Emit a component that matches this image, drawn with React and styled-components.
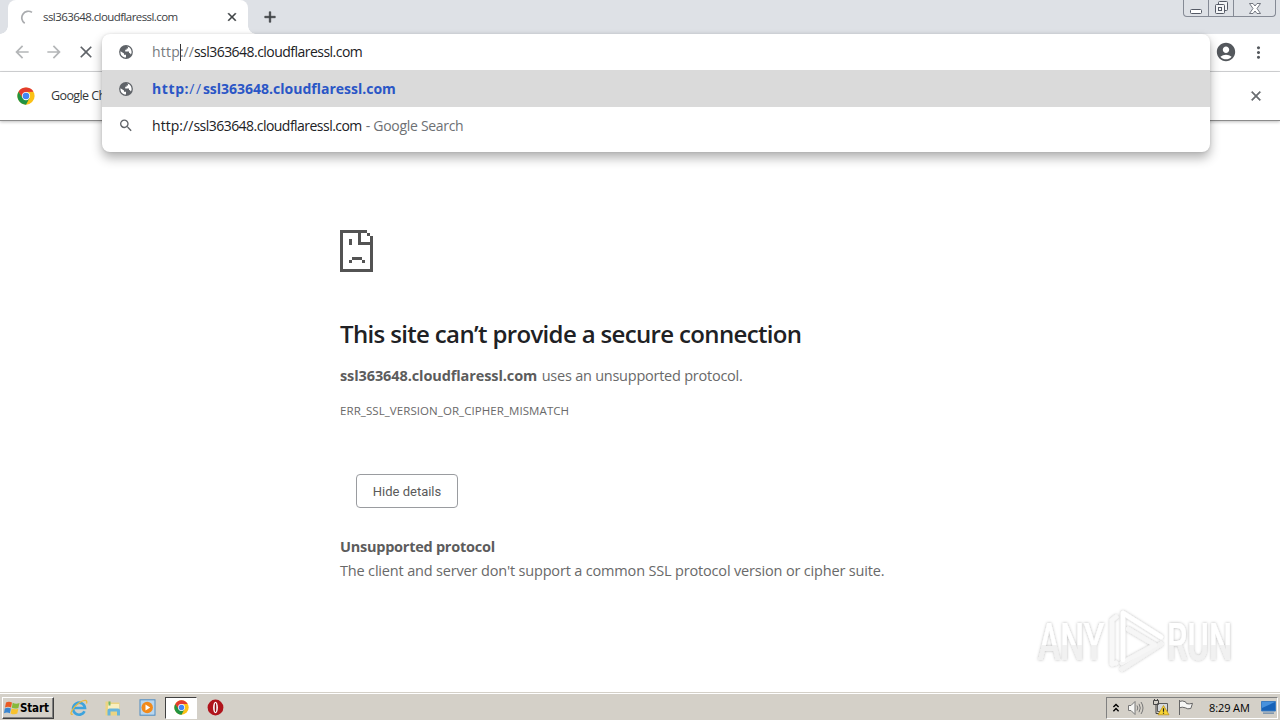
import React from 'react';
import styled, {createGlobalStyle} from 'styled-components';
import {MdSearch, MdArrowBack, MdArrowForward, MdClose, MdAdd, MdAccountCircle, MdMoreVert} from 'react-icons/md';

const GlobeIcon = () => (
    <svg width="16" height="16" viewBox="0 0 16 16">
        <circle cx="8" cy="8" r="6.9" fill="#5f6368" />
        <path d="M8.8 2.4C11.6 2.6 13.6 5 13.6 8C13.6 9.2 13.2 10 12.8 10.4C12.2 9.6 12 9 11 9V7.4H7.2V5.8H8.6V4.4H10V3.2z" fill="#fff" />
        <path d="M2.5 7.2L6 9.6V10.8H8V13.5C4.8 13.6 2 11 2.5 7.2z" fill="#fff" />
    </svg>
);

const ChromeLogo = ({size}) => (
    <svg width={size} height={size} viewBox="0 0 48 48">
        <circle cx="24" cy="24" r="23" fill="#fbc116" />
        <path d="M24 24 L4.1 12.5 A23 23 0 0 1 43.9 12.5 L24 13 Z" fill="#e33b2e" />
        <path d="M4.1 12.5 A23 23 0 0 0 24 47 L33.5 29.5 L14.5 29.5 Z" fill="#229342" />
        <path d="M4.1 12.5 L24 12.5 L14.5 29.5 Z" fill="#e33b2e" />
        <path d="M4.1 12.5 L14.5 29.5 L24 35 L17 41 Z" fill="#229342" />
        <circle cx="24" cy="24" r="11" fill="#fff" />
        <circle cx="24" cy="24" r="8.8" fill="#4285f4" />
    </svg>
);

const SadFile = () => (
    <svg width="33" height="42" viewBox="0 0 11 14" fill="#535353" shapeRendering="crispEdges">
        <path d="M0 0h9v1h1v1h1v12H0z M1 1v12h9V5H6V1z M7 1v3h3V2H9V1z" fillRule="evenodd" />
        <path d="M3 3h1v2H3z M4 9h3.34v1H4z M3 10h1v1H3z M7.34 10h1v1h-1z" />
    </svg>
);

const Watermark = () => (
    <svg width="220" height="76" viewBox="0 0 220 76">
        <defs>
            <linearGradient id="fade" x1="0" y1="0" x2="0" y2="1">
                <stop offset="0.55" stopColor="#fff" />
                <stop offset="0.55" stopColor="#f1f1f1" />
            </linearGradient>
            <filter id="glow" x="-20%" y="-20%" width="140%" height="140%">
                <feDropShadow dx="0" dy="0" stdDeviation="1.6" floodColor="#000" floodOpacity="0.3" />
            </filter>
        </defs>
        <g filter="url(#glow)" fill="url(#fade)" fontFamily="Roboto, sans-serif" fontWeight="500" fontSize="51">
            <text transform="translate(8 55.5) scale(0.66 1)">ANY</text>
            <text transform="translate(137 55.5) scale(0.64 1)">RUN</text>
        </g>
        <g filter="url(#glow)" fill="none" strokeWidth="4.5" strokeLinejoin="round" strokeLinecap="round">
            <path d="M86 13 L82 16 V60 L86 59" stroke="#f8f8f8" />
            <path d="M131 40 L92 65" stroke="#f3f3f3" />
            <path d="M98 25 L125 41 L92 59" stroke="#f6f6f6" />
            <path d="M93 56 V9 L131 33" stroke="#fff" />
        </g>
    </svg>
);

const WindowsFlag = () => (
    <svg width="16" height="16" viewBox="0 0 16 16">
        <path d="M2 2.5Q5 1 8 2.6L7 7.6Q4 6 1 7.6z" fill="#ea5b25" />
        <path d="M8.7 2.8Q12 4.4 15.5 3L14.4 8Q11 9.2 7.8 7.8z" fill="#86b93b" />
        <path d="M.8 8.4Q4 7 6.9 8.4L5.9 13.2Q3 11.8 0 13.2z" fill="#3a86d1" />
        <path d="M7.6 8.6Q11 10 14.3 8.8L13.3 13.6Q10 15 6.6 13.4z" fill="#f8c22d" />
    </svg>
);

const ExplorerIcon = () => (
    <svg width="18" height="18" viewBox="0 0 18 18">
        <path d="M14.5 12.2A6 6 0 1 1 15 9H4" fill="none" stroke="#3da3dd" strokeWidth="2.6" />
        <path d="M3 15C-2 17 3 8 9 4C14 .5 18 .5 16.5 4.5" fill="none" stroke="#e9b93c" strokeWidth="1.3" />
    </svg>
);

const FolderIcon = () => (
    <svg width="18" height="18" viewBox="0 0 18 18">
        <path d="M1.5 2.5h5l1 1h8v13h-14z" fill="#ecd482" />
        <path d="M4 5h11v6H4z" fill="#f9efbf" />
        <path d="M4.5 2.5h2v4h-2z" fill="#6fb66a" />
        <path d="M3.5 16.5V11.5Q3.5 9.5 5.5 9.5H14Q16 9.5 16 11.5V16.5H13V12.5H6.5V16.5z" fill="#67b5dd" />
    </svg>
);

const PlayerIcon = () => (
    <svg width="17" height="17" viewBox="0 0 17 17">
        <rect x="1" y=".8" width="15" height="15.4" fill="#b9d6ee" stroke="#4e8cc2" />
        <circle cx="8.2" cy="8.5" r="5.7" fill="#f28a1b" />
        <path d="M6.5 5.4V11.6L11.2 8.5z" fill="#fff" />
    </svg>
);

const OperaIcon = () => (
    <svg width="17" height="17" viewBox="0 0 17 17">
        <circle cx="8.5" cy="8.5" r="7.9" fill="#b0141c" />
        <ellipse cx="8.5" cy="8.5" rx="2.4" ry="5.7" fill="#fff" />
        <ellipse cx="8.5" cy="8.5" rx="0.8" ry="4.6" fill="#8f0e15" />
    </svg>
);

const TrayChevron = () => (
    <svg width="8" height="10" viewBox="0 0 8 10" fill="none" stroke="#000" strokeWidth="1.4">
        <path d="M1.4 4L4 1.4L6.6 4M1.4 8.2L4 5.6L6.6 8.2" />
    </svg>
);

const SpeakerIcon = () => (
    <svg width="18" height="16" viewBox="0 0 18 16" fill="none" stroke="#777">
        <path d="M1.5 5.5H4L8 1.5V14.5L4 10.5H1.5z" fill="#f7f7f5" />
        <path d="M10 5.5Q11.6 8 10 10.5M12 3.8Q14.6 8 12 12.2M14 2Q18 8 14 14" />
    </svg>
);

const NetworkIcon = () => (
    <svg width="18" height="17" viewBox="0 0 18 17">
        <path d="M5.5 4.5h10v8h-10z" fill="#d5d9dc" stroke="#5b5b5b" />
        <path d="M1.5 1.5h5v4h-5z M4 5.5V14.5H9" fill="none" stroke="#444" />
        <path d="M2.5 0v2M5.5 0v2" stroke="#444" />
        <path d="M11.5 6.5L17 15.8H6z" fill="#f7d433" stroke="#b98d10" strokeWidth=".7" />
        <path d="M11.5 9.3V12.8M11.5 13.7V14.8" stroke="#222" strokeWidth="1.2" />
    </svg>
);

const FlagIcon = () => (
    <svg width="18" height="17" viewBox="0 0 18 17" fill="#f7f7f5" stroke="#666">
        <path d="M2.5 1V16M2.5 2.5Q5 1.2 8.5 2.8L9.5 4.6Q12 5.4 15.5 4.3L13.8 9.5Q10.5 10.5 8.3 8.8Q5 7.6 2.5 8.8" />
    </svg>
);

const DesktopIcon = () => (
    <svg width="17" height="15" viewBox="0 0 17 15">
        <path d="M1.5 1.5h14v9.5h-14z" fill="#1762b8" stroke="#3d7cc0" />
        <path d="M2 2H15L2 8z" fill="#4791dd" />
        <path d="M3 12.5h11v1.3H3z" fill="#6b89a8" />
    </svg>
);

const App = () => (
    <Screen>
        <GlobalStyle />
        <TabStrip>
            <Tab>
                <Spinner viewBox="0 0 14 14">
                    <path d="M4.4 12.4A6 6 0 0 1 11.2 2.2" />
                </Spinner>
                <TabTitle>ssl363648.cloudflaressl.com</TabTitle>
                <BoldIcon><MdClose size={14} /></BoldIcon>
            </Tab>
            <BoldIcon><MdAdd size={18} /></BoldIcon>
            <WindowButtons>
                <WindowButton $width={24}>
                    <svg width="12" height="5" viewBox="0 0 12 5"><rect x=".5" y=".5" width="11" height="4" rx="1" fill="#fff" stroke="#555a66" /></svg>
                </WindowButton>
                <WindowButton $width={25}>
                    <svg width="13" height="13" viewBox="0 0 13 13" fill="#f4f5f7" stroke="#555a66">
                        <rect x="3.5" y=".5" width="9" height="9" rx="1" />
                        <rect x=".5" y="3.5" width="9" height="9" rx="1" />
                        <rect x="3.5" y="6.5" width="3" height="3" />
                    </svg>
                </WindowButton>
                <WindowButton $width={42}>
                    <svg width="12" height="11" viewBox="0 0 12 11">
                        <path d="M.5 .5H4L6 3L8 .5H11.5L8 5.5L11.5 10.5H8L6 8L4 10.5H.5L4 5.5z" fill="#fff" stroke="#555a66" strokeWidth=".8" />
                    </svg>
                </WindowButton>
            </WindowButtons>
        </TabStrip>
        <Toolbar>
            <NavIcon $muted><MdArrowBack size={20} /></NavIcon>
            <NavIcon $muted><MdArrowForward size={20} /></NavIcon>
            <NavIcon><MdClose size={20} /></NavIcon>
            <ToolbarEnd>
                <MdAccountCircle size={22} />
                <MdMoreVert size={19} />
            </ToolbarEnd>
        </Toolbar>
        <InfoBar>
            <ChromeLogo size={18} />
            <InfoText>Google Chrome</InfoText>
            <BoldIcon><MdClose size={16} /></BoldIcon>
        </InfoBar>
        <Omnibox>
            <OmniRow $height={35}>
                <GlobeIcon />
                <Url><Scheme $spacing={0.2}>http</Scheme><Caret /><Scheme>://</Scheme>ssl363648.cloudflaressl.com</Url>
            </OmniRow>
            <OmniRow $height={37} $selected>
                <GlobeIcon />
                <Match><b>http:</b><Slashes>//</Slashes><b>ssl363648.cloudflaressl.com</b></Match>
            </OmniRow>
            <OmniRow $height={37}>
                <MdSearch size={17} />
                <Url><Plain>http://</Plain>ssl363648.cloudflaressl.com</Url>
                <SearchHint>- Google Search</SearchHint>
            </OmniRow>
        </Omnibox>
        <Page>
            <SadFile />
            <Heading>This site can’t provide a secure connection</Heading>
            <Summary><Host>ssl363648.cloudflaressl.com</Host> uses an unsupported protocol.</Summary>
            <ErrorCode>ERR_SSL_VERSION_OR_CIPHER_MISMATCH</ErrorCode>
            <DetailsButton>Hide details</DetailsButton>
            <DetailTitle>Unsupported protocol</DetailTitle>
            <DetailText>The client and server don't support a common SSL protocol version or cipher suite.</DetailText>
        </Page>
        <WatermarkSpot><Watermark /></WatermarkSpot>
        <Taskbar>
            <StartButton><WindowsFlag />Start</StartButton>
            <TaskItem><ExplorerIcon /></TaskItem>
            <TaskItem><FolderIcon /></TaskItem>
            <TaskItem><PlayerIcon /></TaskItem>
            <TaskItem $active><ChromeLogo size={15} /></TaskItem>
            <TaskItem><OperaIcon /></TaskItem>
            <Tray>
                <TrayChevron />
                <SpeakerIcon />
                <NetworkIcon />
                <FlagIcon />
                <Clock>8:29 AM</Clock>
                <DesktopIcon />
            </Tray>
        </Taskbar>
    </Screen>
);

export default App

// Styled Components

const GlobalStyle = createGlobalStyle`
* {
    box-sizing: border-box;
}

body {
    margin: 0;
    background: #fff;
    font-family: "Open Sans", "Noto Sans", sans-serif;
}

svg {
    display: block;
    flex-shrink: 0;
}
`;

const Screen = styled.div`
    position: relative;
    display: flex;
    flex-direction: column;
    width: 1280px;
    height: 720px;
    overflow: hidden;
    white-space: nowrap;
`;

const TabStrip = styled.div`
    display: flex;
    align-items: center;
    height: 34px;
    padding-left: 8px;
    background: #dee1e6;
    color: #3c4043;
`;

const Tab = styled.div`
    position: relative;
    display: flex;
    align-items: center;
    width: 240px;
    height: 34px;
    margin-right: 13px;
    padding: 0 9px 0 12px;
    border-radius: 8px 8px 0 0;
    background: #fff;

    &::before, &::after {
        content: '';
        position: absolute;
        bottom: 0;
        width: 8px;
        height: 8px;
    }

    &::before {
        left: -8px;
        background: radial-gradient(circle at 0 0, #dee1e6 7.5px, #fff 8px);
    }

    &::after {
        right: -8px;
        background: radial-gradient(circle at 100% 0, #dee1e6 7.5px, #fff 8px);
    }
`;

const Spinner = styled.svg`
    width: 15px;
    height: 15px;
    margin-right: 8px;
    fill: none;
    stroke: #a9abae;
    stroke-width: 1.6;
`;

const BoldIcon = styled.span`
    path:last-child {
        stroke: currentColor;
        stroke-width: 0.8px;
    }
`;

const TabTitle = styled.span`
    flex: 1;
    padding-bottom: 1px;
    font-size: 11.5px;
    letter-spacing: -0.57px;
`;

const WindowButtons = styled.div`
    display: flex;
    align-self: flex-start;
    height: 17px;
    margin: 0 4px 0 auto;
    border: 1px solid #858a95;
    border-top: 0;
    border-radius: 0 0 4px 4px;
`;

const WindowButton = styled.div`
    display: flex;
    align-items: flex-end;
    justify-content: center;
    width: ${props => props.$width}px;
    padding-bottom: 2px;

    & + & {
        border-left: 1px solid #858a95;
    }
`;

const Toolbar = styled.div`
    display: flex;
    align-items: center;
    height: 38px;
    padding: 0 12px 1px;
    border-bottom: 1px solid #d5d6d8;
`;

const NavIcon = styled.div`
    margin-right: 12px;
    color: ${props => props.$muted ? '#b4b6b8' : '#5f6368'};
`;

const ToolbarEnd = styled.div`
    display: flex;
    align-items: center;
    gap: 12px;
    margin-left: auto;
    color: #54585d;
`;

const InfoBar = styled.div`
    display: flex;
    align-items: center;
    height: 49px;
    padding: 0 16px 0 17px;
    border-bottom: 1px solid #8b8b8b;
    box-shadow: 0 1px 3px rgba(0, 0, 0, 0.25);
    color: #6a6d71;
`;

const InfoText = styled.span`
    flex: 1;
    margin-left: 16px;
    padding-bottom: 1px;
    color: #333639;
    font-size: 12.5px;
    letter-spacing: -0.6px;
`;

const Omnibox = styled.div`
    position: absolute;
    top: 34px;
    left: 102px;
    width: 1108px;
    height: 118px;
    padding-top: 1px;
    border-radius: 8px;
    background: #fff;
    box-shadow: 0 6px 11px rgba(0, 0, 0, 0.3), 0 0 3px rgba(0, 0, 0, 0.12);
`;

const OmniRow = styled.div`
    display: flex;
    align-items: center;
    height: ${props => props.$height}px;
    padding-left: 16px;
    background: ${props => props.$selected ? '#dadada' : 'transparent'};
    color: #5f6368;
    font-size: 14px;
    line-height: 18px;

    &:first-child {
        padding-bottom: 1px;
    }

    > svg {
        width: 16px;
        overflow: visible;
    }
`;

const Url = styled.span`
    display: flex;
    align-items: center;
    margin-left: 18px;
    color: #202124;
    letter-spacing: -0.53px;
`;

const Scheme = styled.span`
    color: #777a7e;
    letter-spacing: ${props => props.$spacing || 0}px;
`;

const Plain = styled.span`
    letter-spacing: 0.05px;
`;

const Caret = styled.span`
    width: 1px;
    height: 17px;
    margin-right: -1px;
    background: #333;
`;

const Match = styled.span`
    margin-left: 18px;
    color: #2a56c6;

    b:first-child {
        letter-spacing: 0.6px;
    }
`;

const Slashes = styled.span`
    letter-spacing: 1.7px;
`;

const SearchHint = styled.span`
    margin-left: 4px;
    color: #6d7074;
    letter-spacing: -0.3px;
`;

const Page = styled.main`
    display: flex;
    flex: 1;
    flex-direction: column;
    align-items: flex-start;
    padding: 109px 0 0 340px;
    color: #696969;
    font-size: 14.5px;
`;

const Heading = styled.h1`
    margin: 46px 0 0;
    color: #202124;
    font-size: 24px;
    font-weight: 600;
    letter-spacing: -0.65px;
    line-height: 32px;
`;

const Summary = styled.p`
    margin: 14px 0 0;
    letter-spacing: -0.24px;
    line-height: 24px;
`;

const Host = styled.b`
    margin-right: 1px;
    color: #5c5c5c;
    letter-spacing: -0.1px;
`;

const ErrorCode = styled.div`
    margin-top: 14px;
    font-size: 11.5px;
    letter-spacing: 0.07px;
    line-height: 18px;
`;

const DetailsButton = styled.button`
    width: 102px;
    height: 34px;
    margin: 54px 0 0 16px;
    padding: 0;
    border: 1px solid #9a9ca0;
    border-radius: 4px;
    background: #fff;
    color: #5a5a5a;
    font: 13px Roboto, sans-serif;
`;

const DetailTitle = styled.b`
    margin-top: 27px;
    color: #5c5c5c;
    letter-spacing: -0.25px;
    line-height: 24px;
`;

const DetailText = styled.p`
    margin: 0;
    letter-spacing: -0.17px;
    line-height: 24px;
`;

const WatermarkSpot = styled.div`
    position: absolute;
    top: 604px;
    left: 1030px;
`;

const Taskbar = styled.footer`
    display: flex;
    align-items: center;
    height: 28px;
    padding: 2px 2px 0;
    border-top: 1px solid #d4d0c8;
    box-shadow: inset 0 1px #fff;
    background: #d4d0c8;
`;

const StartButton = styled.div`
    display: flex;
    align-items: center;
    width: 52px;
    height: 22px;
    margin-right: 9px;
    padding-left: 1px;
    border: 1px solid;
    border-color: #fff #404040 #404040 #fff;
    box-shadow: inset -1px -1px #808080;
    color: #000;
    font: bold 11.5px "DejaVu Sans Condensed", "DejaVu Sans", sans-serif;
    letter-spacing: -0.15px;
`;

const TaskItem = styled.div`
    display: flex;
    align-items: center;
    justify-content: center;
    width: 32px;
    height: 22px;
    margin-right: 2px;
    border: 1px solid;
    border-color: ${props => props.$active ? '#404040 #fff #fff #404040' : 'transparent'};
    background: ${props => props.$active ? '#fff' : 'transparent'};
`;

const Tray = styled.div`
    display: flex;
    align-items: center;
    gap: 7px;
    width: 172px;
    height: 22px;
    margin-left: auto;
    padding-left: 5px;
    border: 1px solid;
    border-color: #808080 #fff #fff #808080;
`;

const Clock = styled.span`
    margin: 0 3px 0 7px;
    padding-bottom: 1px;
    color: #000;
    font-size: 11px;
    letter-spacing: -0.1px;
`;
